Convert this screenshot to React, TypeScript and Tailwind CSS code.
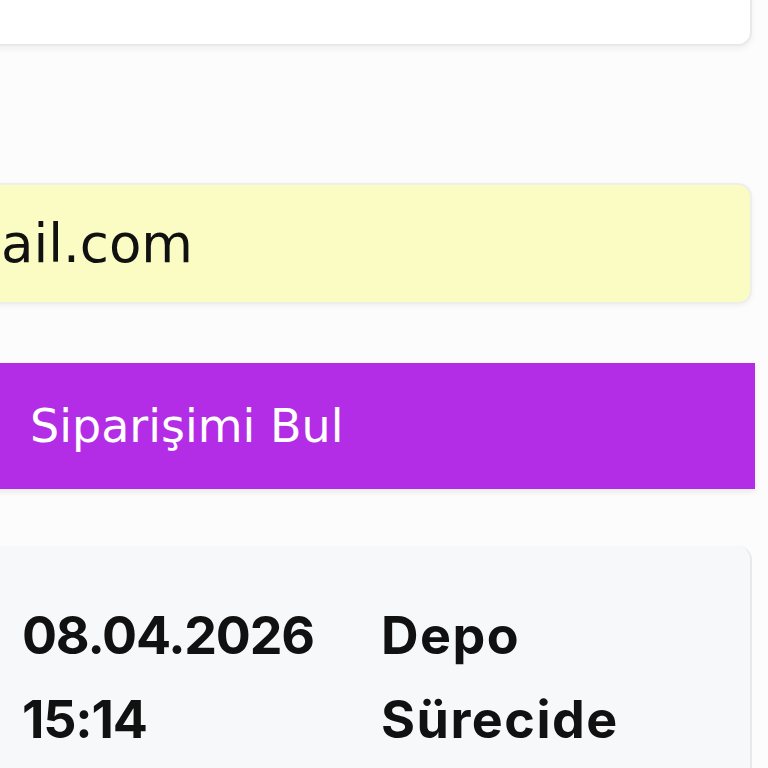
export default function App() {
  return (
    <div className="h-[768px] w-[768px] overflow-hidden bg-[#fcfcfc]">
      <div className="ml-[-40px] flex w-[792px] flex-col">
        <div className="mt-[-100px] h-[146px] rounded-[14px] border-2 border-[#e9e9eb] bg-white shadow-[0_3px_6px_rgba(0,0,0,0.05)]" />
        <div className="mt-[137px] flex h-[121px] items-center rounded-[14px] border-2 border-[#eeeeea] bg-[#fafcc4] shadow-[0_2px_5px_rgba(0,0,0,0.05)]">
          <span
            className="ml-[39px] text-[53px] leading-none text-[#111111]"
            style={{ fontFamily: '"DejaVu Sans", sans-serif' }}
          >
            ail.com
          </span>
        </div>
        <button
          className="mt-[59px] mr-[-3px] flex h-[126px] items-center bg-[#b22de5] pl-[70px] text-left shadow-[0_3px_6px_rgba(0,0,0,0.08)]"
          style={{ fontFamily: '"DejaVu Sans", sans-serif' }}
        >
          <span className="text-[46px] font-normal text-white">Siparişimi Bul</span>
        </button>
        <div className="mt-[57px] h-[300px] rounded-tr-[14px] border-r-2 border-[#e8e9ec] bg-[#f7f8fa]">
          <div
            className="flex pl-[62px] pt-[48px] text-[52px] font-bold leading-[84px] text-[#111111]"
            style={{ fontFamily: 'Inter, sans-serif' }}
          >
            <div className="w-[359px] tracking-[-1.2px]">
              <div>08.04.2026</div>
              <div>15:14</div>
            </div>
            <div className="tracking-[1.5px]">
              <div>Depo</div>
              <div>Sürecide</div>
            </div>
          </div>
        </div>
      </div>
    </div>
  );
}
